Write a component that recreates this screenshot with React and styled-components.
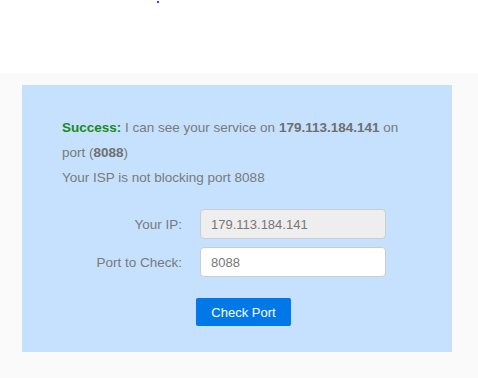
import React from "react";
import styled, { createGlobalStyle } from "styled-components";

const GlobalStyle = createGlobalStyle`
  html, body {
    margin: 0;
    padding: 0;
    background: #fafafa;
  }
  body {
    font-family: "Liberation Sans", Arial, sans-serif;
    font-size: 13.5px;
    color: #777;
  }
`;

const TopBar = styled.div`
  height: 73px;
  background: #fff;
  position: relative;
`;

const Dot = styled.span`
  position: absolute;
  left: 157px;
  top: 1px;
  width: 2px;
  height: 2px;
  background: #3344ee;
`;

const Page = styled.div`
  padding: 12px 26px 27px 22px;
`;

const Panel = styled.div`
  background: #c5e1fd;
  padding: 30px 40px 26px 40px;
`;

const Message = styled.p`
  margin: 0;
  line-height: 25px;
  color: #7a7a7a;
`;

const Strong = styled.b`
  color: ${(p) => (p.$green ? "#1a8a1a" : "#6f6f6f")};
`;

const Form = styled.div`
  margin-top: 19px;
  display: grid;
  grid-template-columns: 120px 186px;
  column-gap: 18px;
  row-gap: 8px;
  align-items: center;
`;

const Label = styled.label`
  text-align: right;
  color: #7a7a7a;
`;

const Input = styled.input`
  box-sizing: border-box;
  width: 186px;
  height: 30px;
  border: 1px solid #ccc;
  border-radius: 4px;
  padding: 0 10px;
  font: inherit;
  font-size: 13px;
  color: #777;
  background: ${(p) => (p.readOnly ? "#eee" : "#fff")};
  outline: none;
`;

const Button = styled.button`
  margin: 21px 0 0 134px;
  width: 95px;
  height: 28px;
  border: none;
  border-radius: 2px;
  background: #0078e7;
  color: #fff;
  font: inherit;
  font-size: 13px;
  cursor: pointer;
`;

export default function App() {
  return (
    <>
      <GlobalStyle />
      <TopBar>
        <Dot />
      </TopBar>
      <Page>
        <Panel>
          <Message>
            <Strong $green>Success:</Strong> I can see your service on{" "}
            <Strong>179.113.184.141</Strong> on port (<Strong>8088</Strong>)
          </Message>
          <Message>Your ISP is not blocking port 8088</Message>
          <Form>
            <Label>Your IP:</Label>
            <Input readOnly value="179.113.184.141" />
            <Label>Port to Check:</Label>
            <Input defaultValue="8088" />
          </Form>
          <Button>Check Port</Button>
        </Panel>
      </Page>
    </>
  );
}
